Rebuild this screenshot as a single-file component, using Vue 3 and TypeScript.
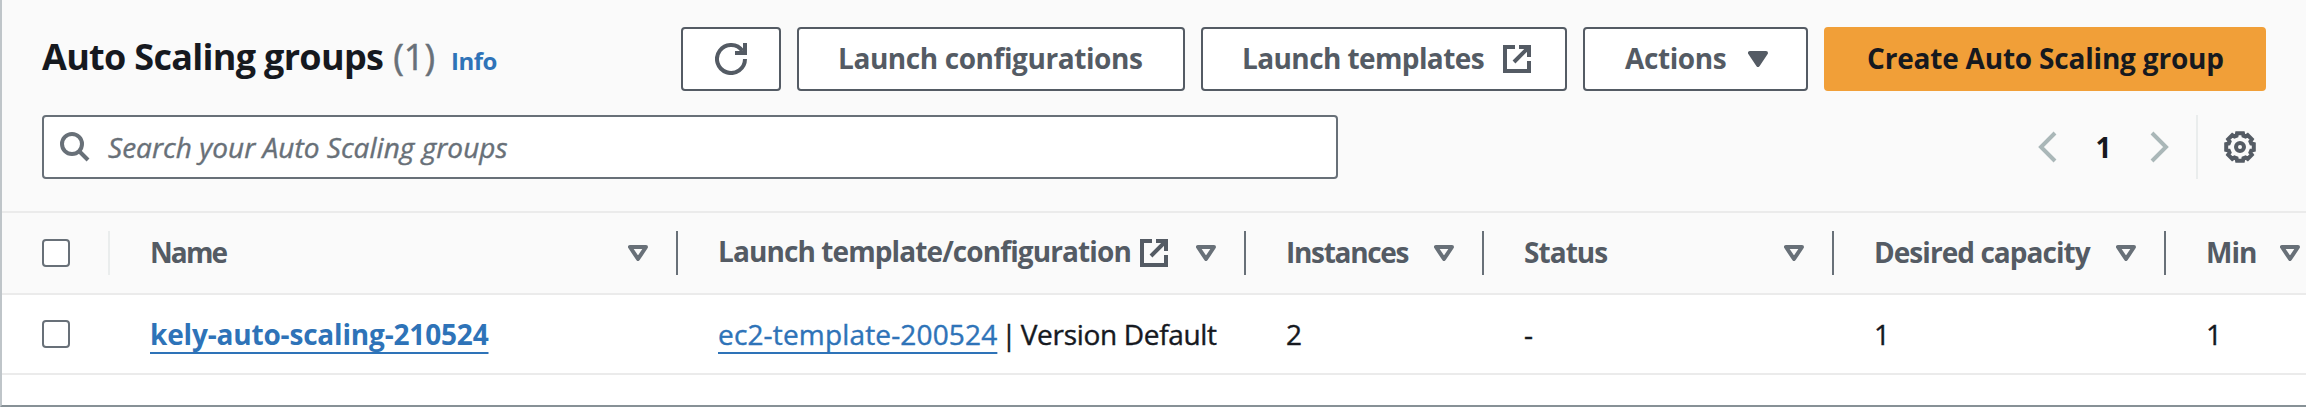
<script setup lang="ts">
interface Column {
  key: string
  label: string
  external?: boolean
}

const columns: Column[] = [
  { key: 'name', label: 'Name' },
  { key: 'template', label: 'Launch template/configuration', external: true },
  { key: 'instances', label: 'Instances' },
  { key: 'status', label: 'Status' },
  { key: 'desired', label: 'Desired capacity' },
  { key: 'min', label: 'Min' },
]

const groups = [
  {
    name: 'kely-auto-scaling-210524',
    template: 'ec2-template-200524',
    version: 'Version Default',
    instances: 2,
    status: '-',
    desired: 1,
    min: 1,
  },
]

// Outline of the eight-toothed settings wheel.
const gearPoints = Array.from({ length: 8 }, (_, i) =>
  [[-17, 11.8], [-12, 14.1], [12, 14.1], [17, 11.8]].map(([offset, radius]) => {
    const angle = ((i * 45 + offset) * Math.PI) / 180
    return `${(16 + radius * Math.cos(angle)).toFixed(2)},${(16 + radius * Math.sin(angle)).toFixed(2)}`
  }).join(' '),
).join(' ')
</script>

<template>
  <main class="panel">
    <header class="top">
      <div class="heading">
        <h2 class="title">Auto Scaling groups</h2>
        <span class="count">(1)</span>
        <a class="info">Info</a>
      </div>
      <div class="actions">
        <button class="btn refresh" aria-label="Refresh">
          <svg class="icon" viewBox="0 0 32 32" width="32" height="32">
            <path d="M30 16A14 14 0 1 1 27.5 8" />
            <path d="M20 10H30V0" />
          </svg>
        </button>
        <button class="btn configs"><span>Launch configurations</span></button>
        <button class="btn templates">
          <span>Launch templates</span>
          <svg class="icon" viewBox="0 0 28 28" width="28" height="28">
            <path d="M12 2H2V26H26V16M16 2H26V12M26 2L11 17" />
          </svg>
        </button>
        <button class="btn menu">
          <span>Actions</span>
          <svg class="caret" viewBox="0 0 20 16" width="20" height="16">
            <path d="M2 2H18L10 14Z" />
          </svg>
        </button>
        <button class="btn primary"><span>Create Auto Scaling group</span></button>
      </div>
    </header>

    <div class="tools">
      <div class="search">
        <svg class="icon" viewBox="0 0 30 30" width="30" height="30">
          <circle cx="12" cy="12" r="10" />
          <path d="M19 19L28 28" />
        </svg>
        <span class="placeholder">Search your Auto Scaling groups</span>
      </div>
      <nav class="pager">
        <svg class="chevron" viewBox="0 0 19 32" width="19" height="32"><path d="M17 2L3 16L17 30" /></svg>
        <b class="page">1</b>
        <svg class="chevron" viewBox="0 0 19 32" width="19" height="32"><path d="M2 2L16 16L2 30" /></svg>
        <i class="rule"></i>
        <svg class="icon" viewBox="0 0 32 32" width="32" height="32">
          <polygon :points="gearPoints" />
          <circle cx="16" cy="16" r="4" />
        </svg>
      </nav>
    </div>

    <div class="row head">
      <div class="pick"><i class="box"></i></div>
      <div v-for="c in columns" :key="c.key" class="cell" :class="c.key">
        <span class="label">{{ c.label }}</span>
        <svg v-if="c.external" class="icon ext" viewBox="0 0 28 28" width="28" height="28">
          <path d="M12 2H2V26H26V16M16 2H26V12M26 2L11 17" />
        </svg>
        <svg class="sort" viewBox="0 0 20 16" width="20" height="16">
          <path d="M2 2H18L10 14Z" />
        </svg>
      </div>
    </div>

    <div v-for="g in groups" :key="g.name" class="row body">
      <div class="pick"><i class="box"></i></div>
      <div class="cell"><a class="link strong">{{ g.name }}</a></div>
      <div class="cell"><a class="link">{{ g.template }}</a><span class="bar">|</span><span class="version">{{ g.version }}</span></div>
      <div class="cell">{{ g.instances }}</div>
      <div class="cell">{{ g.status }}</div>
      <div class="cell">{{ g.desired }}</div>
      <div class="cell">{{ g.min }}</div>
    </div>
  </main>
</template>

<style>
body {
  margin: 0;
  overflow: hidden;
}
</style>

<style scoped>
* {
  box-sizing: border-box;
}
.panel {
  width: 2306px;
  height: 407px;
  border-left: 2px solid #bfc5c9;
  border-bottom: 2px solid #879196;
  background: #fff;
  overflow: hidden;
  font-family: "Open Sans", "Noto Sans", sans-serif;
  font-size: 28px;
  line-height: 40px;
  color: #16191f;
  white-space: nowrap;
}
.icon {
  flex: none;
  fill: none;
  stroke: #545b64;
  stroke-width: 4;
}
.top {
  display: flex;
  justify-content: space-between;
  height: 115px;
  padding: 27px 40px 0;
  background: #fafafa;
}
.heading {
  display: flex;
  align-items: baseline;
  height: 64px;
  padding-top: 6px;
}
.title {
  margin: 0;
  font-size: 36px;
  line-height: 48px;
  letter-spacing: -0.7px;
}
.count {
  margin-left: 10px;
  font-size: 36px;
  color: #687078;
  -webkit-text-stroke: 0.5px;
}
.info {
  margin-left: 16px;
  font-size: 24px;
  font-weight: 700;
  letter-spacing: -0.5px;
  color: #2e73b8;
}
.actions {
  display: flex;
  gap: 16px;
}
.btn {
  display: flex;
  align-items: center;
  height: 64px;
  padding: 0;
  border: 2px solid #545b64;
  border-radius: 4px;
  background: #fff;
  color: #545b64;
  font: 700 28px/40px "Open Sans", "Noto Sans", sans-serif;
}
.btn span {
  margin-top: -2px;
}
.refresh {
  width: 100px;
  justify-content: center;
}
.configs {
  width: 388px;
  padding-left: 39px;
  letter-spacing: -0.42px;
}
.templates {
  width: 366px;
  padding-left: 39px;
  letter-spacing: -0.6px;
}
.templates span {
  width: 261px;
  text-align: left;
}
.menu {
  width: 225px;
  padding-left: 40px;
  letter-spacing: -0.4px;
}
.menu span {
  width: 123px;
  text-align: left;
}
.caret {
  fill: #545b64;
  stroke: #545b64;
  stroke-width: 4;
  stroke-linejoin: round;
}
.primary {
  width: 442px;
  padding-left: 41px;
  border-color: #f19f38;
  background: #f19f38;
  color: #16191f;
  letter-spacing: -0.2px;
}
.tools {
  display: flex;
  justify-content: space-between;
  height: 96px;
  padding: 0 50px 0 40px;
  background: #fafafa;
}
.search {
  display: flex;
  align-items: center;
  gap: 18px;
  width: 1296px;
  height: 64px;
  padding-left: 16px;
  border: 2px solid #687078;
  border-radius: 4px;
  background: #fff;
  color: #687078;
  font-style: italic;
}
.search .icon {
  stroke: #687078;
}
.placeholder {
  letter-spacing: 0.03px;
  -webkit-text-stroke: 0.4px;
}
.pager {
  display: flex;
  align-items: center;
  height: 64px;
}
.chevron {
  fill: none;
  stroke: #aab7b8;
  stroke-width: 4;
}
.page {
  width: 93px;
  text-align: center;
}
.rule {
  width: 2px;
  height: 64px;
  margin: 0 26px 0 27px;
  background: #eaeded;
}
.row {
  display: grid;
  grid-template-columns: 108px 568px 568px 238px 350px 332px 140px;
}
.head {
  height: 84px;
  border-top: 2px solid #ebebeb;
  border-bottom: 2px solid #ebebeb;
  background: #fafafa;
  align-items: center;
}
.body {
  height: 80px;
  border-bottom: 2px solid #ebebeb;
  align-items: center;
  -webkit-text-stroke: 0.4px;
}
.pick {
  display: flex;
  align-items: center;
  height: 44px;
  padding-left: 40px;
}
.head .pick {
  border-right: 2px solid #eaeded;
}
.box {
  width: 28px;
  height: 28px;
  border: 2px solid #687078;
  border-radius: 4px;
  background: #fff;
}
.cell {
  display: flex;
  align-items: center;
  height: 44px;
  padding-left: 40px;
}
.head .cell {
  padding-right: 28px;
  border-right: 2px solid #687078;
  color: #545b64;
  font-weight: 700;
}
.head .cell.min {
  padding-right: 6px;
  border-right: 0;
}
.label {
  margin-top: -2px;
  letter-spacing: -0.95px;
}
.name .label {
  letter-spacing: -1.9px;
}
.template .label {
  margin-top: -4px;
  letter-spacing: -0.9px;
}
.instances .label {
  letter-spacing: -1.3px;
}
.ext {
  margin-left: 9px;
}
.sort {
  flex: none;
  margin-left: auto;
  fill: none;
  stroke: #687078;
  stroke-width: 4;
  stroke-linejoin: round;
}
.link {
  color: #2e73b8;
  letter-spacing: 0.16px;
  text-decoration: underline;
  text-decoration-thickness: 2px;
  text-underline-offset: 7px;
  text-decoration-skip-ink: none;
}
.strong {
  font-weight: 700;
  letter-spacing: -0.18px;
  -webkit-text-stroke: 0;
}
.bar {
  margin: 0 4px;
}
.version {
  letter-spacing: -0.32px;
}
</style>
